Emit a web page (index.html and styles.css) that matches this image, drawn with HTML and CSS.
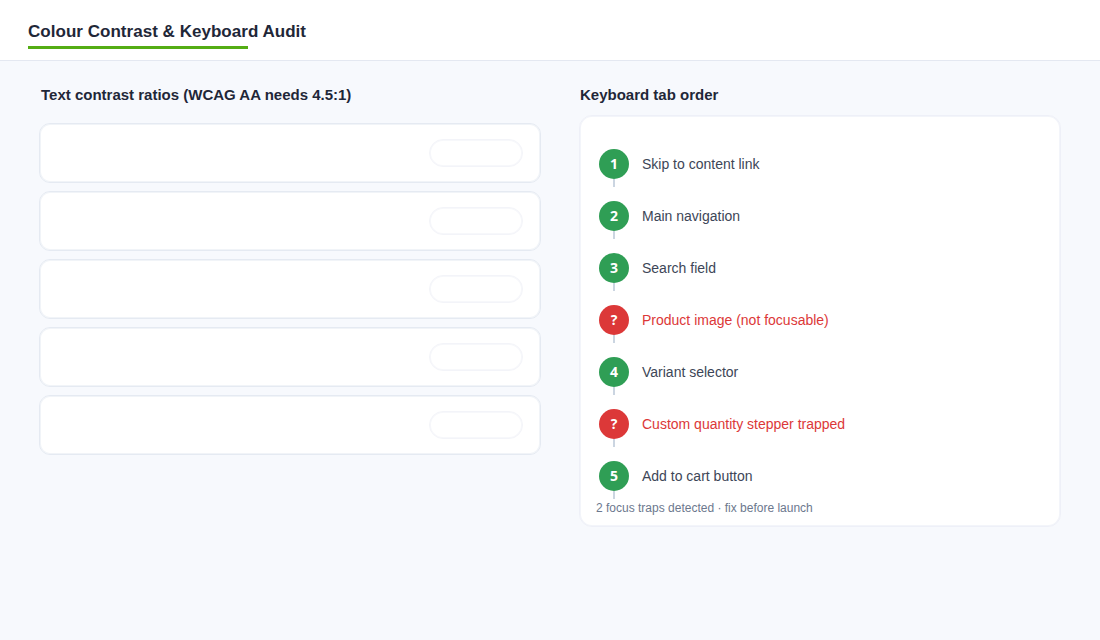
FILE: index.html
```html
<!DOCTYPE html>
<html lang="en">
  <head>
    <title>Colour Contrast &amp; Keyboard Audit</title>
    <meta charset="utf-8" />
    <link rel="stylesheet" href="styles.css">
  </head>
  <body>
    <header class="header">
      <h1 class="title">Colour Contrast &amp; Keyboard Audit</h1>
      <div class="underline"></div>
    </header>
    <main class="main">
      <section class="contrast">
        <h2>Text contrast ratios (WCAG AA needs 4.5:1)</h2>
        <div class="cards">
          <div class="card"><span class="pill"></span></div>
          <div class="card"><span class="pill"></span></div>
          <div class="card"><span class="pill"></span></div>
          <div class="card"><span class="pill"></span></div>
          <div class="card"><span class="pill"></span></div>
        </div>
      </section>
      <section class="keyboard">
        <h2>Keyboard tab order</h2>
        <div class="panel">
          <ol class="steps">
            <li class="step"><span class="marker">1</span><span>Skip to content link</span></li>
            <li class="step"><span class="marker">2</span><span>Main navigation</span></li>
            <li class="step"><span class="marker">3</span><span>Search field</span></li>
            <li class="step fail"><span class="marker">?</span><span>Product image (not focusable)</span></li>
            <li class="step"><span class="marker">4</span><span>Variant selector</span></li>
            <li class="step fail"><span class="marker">?</span><span>Custom quantity stepper trapped</span></li>
            <li class="step"><span class="marker">5</span><span>Add to cart button</span></li>
          </ol>
          <p class="note">2 focus traps detected · fix before launch</p>
        </div>
      </section>
    </main>
  </body>
</html>
```
FILE: styles.css
```css
* {
  box-sizing: border-box;
}
html,
body {
  margin: 0;
  height: 100%;
  font: 14px "Liberation Sans", Arial, sans-serif;
  color: #3d4657;
  background: #f7f9fd;
}
.header {
  height: 61px;
  padding: 22px 28px 0;
  background: #fff;
  border-bottom: 1px solid #e4e8f1;
}
.title {
  margin: 0;
  font-size: 17px;
  line-height: 20px;
  letter-spacing: 0.03px;
  color: #1f2738;
}
.underline {
  width: 220px;
  height: 3px;
  margin-top: 4px;
  background: #54ad14;
}
.main {
  display: grid;
  grid-template-columns: 502px 482px;
  gap: 38px;
  padding: 25px 39px 0;
}
h2 {
  margin: 0;
  padding-left: 1px;
  font-size: 15px;
  line-height: 18px;
  color: #1f2738;
}
.contrast h2 {
  padding-left: 2px;
}
.cards {
  display: grid;
  gap: 8px;
  margin-top: 19px;
}
.card {
  display: flex;
  align-items: center;
  justify-content: flex-end;
  height: 60px;
  padding-right: 17px;
  border: 1px solid #e5eaf2;
  border-radius: 11px;
  background: #fff;
  box-shadow: inset 0 0 0 1px #f1f4f8;
}
.pill {
  width: 94px;
  height: 28px;
  border: 1px solid #f3f4f9;
  border-radius: 14px;
  box-shadow: inset 0 0 0 1px #f7f8fb;
}
.panel {
  height: 412px;
  margin-top: 11px;
  padding: 23px 15px 0;
  border: 1px solid #eef0f8;
  border-radius: 13px;
  background: #fff;
  box-shadow: inset 0 0 0 1px #f3f5fa;
}
.steps {
  margin: 0;
  padding: 0 0 0 4px;
  list-style: none;
}
.step {
  display: flex;
  align-items: center;
  gap: 13px;
  height: 52px;
  padding-bottom: 2px;
}
.marker {
  position: relative;
  width: 30px;
  height: 30px;
  border-radius: 50%;
  font: bold 14px/30px "Open Sans", sans-serif;
  text-align: center;
  color: #fff;
  background: #2f9e55;
}
.marker::after {
  content: "";
  position: absolute;
  top: 30px;
  left: 14px;
  width: 2px;
  height: 8px;
  background: #cbd5e1;
}
.fail {
  color: #dc3838;
}
.fail .marker {
  background: #dc3838;
}
.note {
  margin: -2px 0 0;
  padding-left: 1px;
  font-size: 12px;
  line-height: 14px;
  color: #6c788e;
}
```
